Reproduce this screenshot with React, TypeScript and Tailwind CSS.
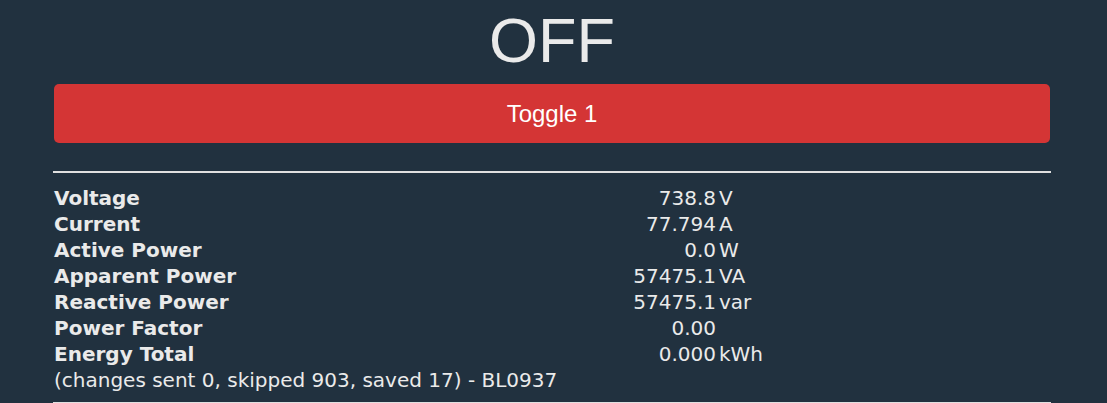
import React from "react";

const rows = [
  { label: "Voltage", value: "738.8", unit: "V" },
  { label: "Current", value: "77.794", unit: "A" },
  { label: "Active Power", value: "0.0", unit: "W" },
  { label: "Apparent Power", value: "57475.1", unit: "VA" },
  { label: "Reactive Power", value: "57475.1", unit: "var" },
  { label: "Power Factor", value: "0.00", unit: "" },
  { label: "Energy Total", value: "0.000", unit: "kWh" },
];

const App = () => {
  return (
    <div className="min-h-screen bg-[#21313f] text-[#eaeaea]">
      <div className="ml-[53px] w-[998px]">
        {/* Power state */}
        <div className="h-[84px] text-center font-['Liberation_Sans',Arial,sans-serif] text-[63px] leading-[80px]">OFF</div>

        <button className="block mx-[1px] w-[996px] h-[59px] rounded-[5px] bg-[#d43535] text-white text-[24px] font-['Liberation_Sans',Arial,sans-serif]">
          Toggle 1
        </button>

        <div className="mt-[28px] border-t-2 border-[#e0e0e0]" />

        {/* Energy readings */}
        <div className="pt-[12px] pl-[1px] font-['DejaVu_Sans',Verdana,sans-serif] text-[20px]">
          {rows.map((r) => (
            <div key={r.label} className="grid grid-cols-[578px_84px_auto] h-[26px] leading-[26px]">
              <div className="font-bold">{r.label}</div>
              <div className="text-right">{r.value}</div>
              <div className="pl-[3px]">{r.unit}</div>
            </div>
          ))}
          <div className="h-[26px] leading-[26px]">(changes sent 0, skipped 903, saved 17) - BL0937</div>
        </div>

        <div className="mt-[9px] border-t-2 border-[#e0e0e0]" />
      </div>
    </div>
  );
};

export default App;
